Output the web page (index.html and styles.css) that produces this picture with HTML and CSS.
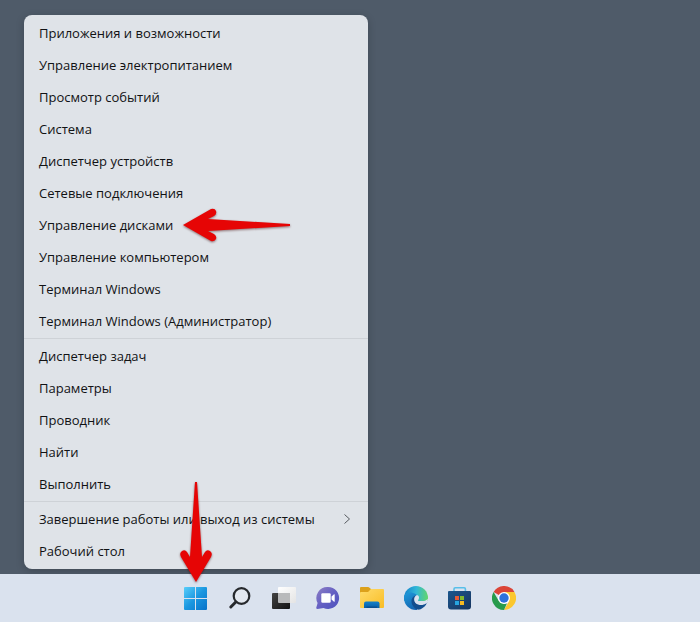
FILE: index.html
```
<!DOCTYPE html>
<html lang="ru">
<head>
<meta charset="utf-8">
<title>Windows</title>
<link rel="stylesheet" href="styles.css">
</head>
<body>

<nav class="menu">
	<ul>
		<li><button type="button">Приложения и возможности</button></li>
		<li><button type="button">Управление электропитанием</button></li>
		<li><button type="button">Просмотр событий</button></li>
		<li><button type="button">Система</button></li>
		<li><button type="button">Диспетчер устройств</button></li>
		<li><button type="button">Сетевые подключения</button></li>
		<li class="marked">
			<button type="button">Управление дисками</button>
			<svg class="arrow arrow-left" viewBox="0 0 108 36"><path d="M0 18 L28 2 Q32 1 33 4 Q34 7 31 9 L25 12 L107 17 L107 19 L25 24 L31 27 Q34 29 33 32 Q31 35 28 34 Z"/></svg>
		</li>
		<li><button type="button">Управление компьютером</button></li>
		<li><button type="button">Терминал Windows</button></li>
		<li><button type="button">Терминал Windows (Администратор)</button></li>
	</ul>
	<ul>
		<li><button type="button">Диспетчер задач</button></li>
		<li><button type="button">Параметры</button></li>
		<li><button type="button">Проводник</button></li>
		<li><button type="button">Найти</button></li>
		<li><button type="button">Выполнить</button></li>
	</ul>
	<ul>
		<li><button type="button">Завершение работы или выход из системы
			<svg class="chevron" viewBox="0 0 6 10"><path d="M.5 .5 L5.500 5 L.5 9.500"/></svg>
		</button></li>
		<li><button type="button">Рабочий стол</button></li>
	</ul>
</nav>

<footer class="taskbar">
	<button type="button" class="start" aria-label="Пуск">
		<svg class="icon" viewBox="0 0 24 24">
			<defs><linearGradient id="win" x1="0" y1="0" x2="24" y2="24" gradientUnits="userSpaceOnUse"><stop offset="0" stop-color="#5bd0fb"/><stop offset=".5" stop-color="#1a97e0"/><stop offset="1" stop-color="#0670c8"/></linearGradient></defs>
			<path fill="url(#win)" d="M1 1h10v11H0V2q0-1 1-1zM12 1h10q1 0 1 1v10H12zM0 13h11v11H1q-1 0-1-1zM12 13h11v10q0 1-1 1H12z"/>
		</svg>
		<svg class="arrow arrow-down" viewBox="0 0 36 100"><path d="M18 100 L3 75 Q1 71 4 69 Q7 67 9 70 L12 75 L17 0 L19 0 L24 75 L27 70 Q29 67 32 69 Q35 71 33 75 Z"/></svg>
	</button>
	<button type="button" aria-label="Поиск">
		<svg class="icon" viewBox="0 0 24 24"><g fill="none" stroke="#26292c" stroke-linecap="round"><circle cx="13.500" cy="10" r="7.800" stroke-width="2.200" fill="#e3e8ef"/><path stroke-width="3" d="M7.800 16l-5 5"/></g></svg>
	</button>
	<button type="button" aria-label="Представление задач">
		<svg class="icon" viewBox="0 0 24 24">
			<defs>
				<linearGradient id="dark" x1="0" y1="0" x2="1" y2="1"><stop offset="0" stop-color="#444"/><stop offset="1" stop-color="#111"/></linearGradient>
				<linearGradient id="pale" x1="0" y1="0" x2="1" y2="1"><stop offset="0" stop-color="#fff"/><stop offset="1" stop-color="#e4e4e4"/></linearGradient>
			</defs>
			<rect x="6" y="1" width="18" height="16" rx="1" fill="url(#pale)"/>
			<rect x="0" y="7" width="18" height="16" rx="1" fill="url(#dark)"/>
			<path fill="#b9babb" d="M6 7h12v10H7q-1 0-1-1z"/>
		</svg>
	</button>
	<button type="button" aria-label="Чат">
		<svg class="icon" viewBox="0 0 24 24">
			<defs><linearGradient id="chat" x1="0" y1="0" x2="1" y2="1"><stop offset="0" stop-color="#8d7fc4"/><stop offset=".5" stop-color="#6560c3"/><stop offset="1" stop-color="#4b50bd"/></linearGradient></defs>
			<path fill="url(#chat)" d="M12 1a11 11 0 1 1-4.500 21L1.500 23q-1.500 0-1.200-1.500L1.600 17A11 11 0 0 1 12 1z"/>
			<rect x="5.300" y="7.300" width="9.400" height="9.400" rx="1.200" fill="#fff"/>
			<path fill="#fff" d="M15.500 10.500L18 8.300q.700-.400.700.500v6.400q0 .900-.700.500l-2.500-2.200z"/>
		</svg>
	</button>
	<button type="button" aria-label="Проводник">
		<svg class="icon" viewBox="0 0 24 24">
			<defs>
				<linearGradient id="folder" x1="0" y1="0" x2="1" y2="1"><stop offset="0" stop-color="#ffdc6c"/><stop offset="1" stop-color="#f9bd25"/></linearGradient>
				<linearGradient id="tray" x1="0" y1="0" x2="0" y2="1"><stop offset="0" stop-color="#1581c9"/><stop offset="1" stop-color="#075da6"/></linearGradient>
			</defs>
			<path fill="#dca11b" d="M0 2q0-1 1-1h7q1 0 1.500.700L11 3v5H0z"/>
			<path fill="url(#folder)" d="M0 7q0-1 1-1h7l3-3h12q1 0 1 1V21q0 1-1 1H1q-1 0-1-1z"/>
			<path fill="url(#tray)" d="M4 22v-4.500Q4 15.500 6 15.500h11.500q2 0 2 2V22z"/>
			<path fill="#0b4f8e" d="M6.500 20.500h10.500V22H6.500z"/>
		</svg>
	</button>
	<button type="button" aria-label="Microsoft Edge">
		<svg class="icon" viewBox="0 0 24 24">
			<defs>
				<linearGradient id="edge-top" x1="0" y1="8" x2="24" y2="10" gradientUnits="userSpaceOnUse"><stop offset="0" stop-color="#1583cb"/><stop offset=".5" stop-color="#31b7d8"/><stop offset="1" stop-color="#62d66b"/></linearGradient>
				<linearGradient id="edge-left" x1="0" y1="6" x2="10" y2="24" gradientUnits="userSpaceOnUse"><stop offset="0" stop-color="#1f9bdc"/><stop offset="1" stop-color="#1262ae"/></linearGradient>
				<clipPath id="edge-round"><circle cx="12" cy="12" r="12"/></clipPath>
			</defs>
			<g clip-path="url(#edge-round)">
				<path fill="url(#edge-top)" d="M0 0h24v15H0z"/>
				<path fill="url(#edge-left)" d="M0 10C2 6.500 6 6 9 7c3 .800 5 2.500 5 4.500L13 24H0z"/>
				<path fill="#124e8e" d="M11.500 9.500C7 11 6.500 16 9 20c1.500 2.300 3.500 3.500 6 4h9v-8l-9 1z"/>
				<path class="edge-gap" d="M13 9c-4 1.500-4 8 1 9.500 3 1 6 .500 8-1l3 1v-6l-2 1c-3 2.500-8 2.500-9 1 0-.700 1-1 1-3 0-1-.500-2-2-2.500z"/>
			</g>
		</svg>
	</button>
	<button type="button" aria-label="Microsoft Store">
		<svg class="icon" viewBox="0 0 24 24">
			<defs><linearGradient id="bag" x1="0" y1="0" x2="1" y2="1"><stop offset="0" stop-color="#1b568d"/><stop offset="1" stop-color="#173560"/></linearGradient></defs>
			<path fill="none" stroke="#58bfe9" stroke-width="1.600" d="M6 6V3q0-1.200 1.200-1.200h9q1.200 0 1.200 1.200v3"/>
			<path fill="url(#bag)" d="M0 6q0-1 1-1h21q1 0 1 1v14.500q0 3-3 3H3q-3 0-3-3z"/>
			<path fill="#e75a35" d="M7 10h4v4H7z"/><path fill="#82b82d" d="M12 10h4v4h-4z"/>
			<path fill="#27a4df" d="M7 15h4v4H7z"/><path fill="#f8b922" d="M12 15h4v4h-4z"/>
		</svg>
	</button>
	<button type="button" aria-label="Google Chrome">
		<svg class="icon" viewBox="0 0 24 24">
			<path fill="#db4437" d="M12 12L1.600 6A12 12 0 0 1 22.400 6z"/>
			<path fill="#fbc72e" d="M12 6h10.400A12 12 0 0 1 12 24l5.200-9z"/>
			<path fill="#279b4c" d="M1.600 6l5.200 9 5.200 3 3-.700L12 24A12 12 0 0 1 1.600 6z"/>
			<circle cx="12" cy="12" r="6" fill="#fff"/>
			<circle cx="12" cy="12" r="4.700" fill="#2e72dc"/>
		</svg>
	</button>
</footer>

</body>
</html>
```
FILE: styles.css
```
* {margin:0;padding:0;box-sizing:border-box;list-style:none;}

body {display:flex;flex-direction:column;align-items:flex-start;min-height:100vh;background:#4f5b69;color:#111214;font-family:"Open Sans","Noto Sans",sans-serif;font-size:13px;line-height:20px;}
button {border:0;background:none;color:inherit;font:inherit;}

.menu {width:344px;max-width:calc(100% - 48px);margin:15px 24px 5px;padding:2px 0;border-radius:8px;background:#dfe3e8;box-shadow:0 2px 8px rgba(0,0,0,.2);}
.menu ul + ul {margin-top:1px;padding-top:1px;border-top:1px solid #ced2d7;}
.menu button {display:flex;align-items:center;justify-content:space-between;width:100%;height:32px;padding:0 18px 0 15px;text-align:left;}
.menu button:hover {background:#d3d8de;}
.menu .marked {position:relative;}
.chevron {width:6px;height:10px;overflow:visible;fill:none;stroke:#55595e;}

.arrow {position:absolute;fill:#e60505;filter:drop-shadow(0 1px 1px rgba(60,0,0,.5));pointer-events:none;}
.arrow-left {left:159px;top:-2px;width:108px;height:36px;}
.arrow-down {left:4px;bottom:40px;width:36px;height:100px;}

.taskbar {display:flex;justify-content:center;width:100%;height:48px;margin-top:auto;background:#dae2ee;}
.taskbar button {display:flex;align-items:center;justify-content:center;width:44px;}
.taskbar .start {position:relative;}
.icon {width:24px;height:24px;}
.edge-gap {fill:#dae2ee;}
```
